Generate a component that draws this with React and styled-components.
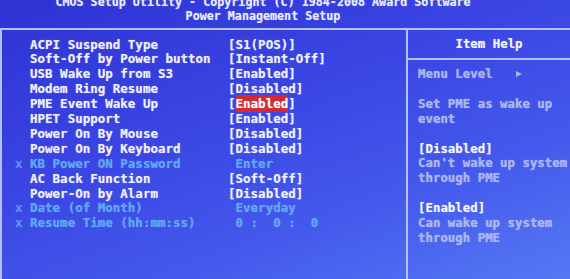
import React from 'react'
import styled, { createGlobalStyle } from 'styled-components'

const rows = [
    { label: 'ACPI Suspend Type', value: '[S1(POS)]' },
    { label: 'Soft-Off by Power button', value: '[Instant-Off]' },
    { label: 'USB Wake Up from S3', value: '[Enabled]' },
    { label: 'Modem Ring Resume', value: '[Disabled]' },
    { label: 'PME Event Wake Up', value: 'Enabled', selected: true },
    { label: 'HPET Support', value: '[Enabled]' },
    { label: 'Power On By Mouse', value: '[Disabled]' },
    { label: 'Power On By Keyboard', value: '[Disabled]' },
    { label: 'KB Power ON Password', value: ' Enter', locked: true },
    { label: 'AC Back Function', value: '[Soft-Off]' },
    { label: 'Power-On by Alarm', value: '[Disabled]' },
    { label: 'Date (of Month)', value: ' Everyday', locked: true },
    { label: 'Resume Time (hh:mm:ss)', value: ' 0 :  0 :  0', locked: true },
]

const help = [
    { text: 'Menu Level   ', arrow: true },
    { text: '' },
    { text: 'Set PME as wake up' },
    { text: 'event' },
    { text: '' },
    { text: '[Disabled]', strong: true },
    { text: "Can't wake up system" },
    { text: 'through PME' },
    { text: '' },
    { text: '[Enabled]', strong: true },
    { text: 'Can wake up system' },
    { text: 'through PME' },
]

function App() {
    return (
        <Screen>
            <GlobalStyle />
            <Header>
                <div>CMOS Setup Utility - Copyright (C) 1984-2008 Award Software</div>
                <div>Power Management Setup</div>
            </Header>
            <Frame>
                <Settings>
                    {rows.map((row, index) => (
                        <Row key={index} $locked={row.locked}>
                            <Mark>{row.locked ? 'x' : ''}</Mark>
                            <Label>{row.label}</Label>
                            <Value>
                                {row.selected ? (
                                    <>[<Selected>{row.value}</Selected>]</>
                                ) : row.value}
                            </Value>
                        </Row>
                    ))}
                </Settings>
                <HelpPanel>
                    <HelpTitle>Item Help</HelpTitle>
                    <HelpBody>
                        {help.map((line, index) => (
                            <HelpLine key={index} $strong={line.strong}>
                                {line.text}
                                {line.arrow && <Arrow />}
                            </HelpLine>
                        ))}
                    </HelpBody>
                </HelpPanel>
            </Frame>
        </Screen>
    )
}

export default App

const GlobalStyle = createGlobalStyle`
    html, body {
        margin: 0;
        padding: 0;
        width: 570px;
        height: 279px;
        overflow: hidden;
        background: #3a42e2;
    }
`

const Screen = styled.div`
    width: 570px;
    height: 279px;
    overflow: hidden;
    display: flex;
    flex-direction: column;
    background: linear-gradient(160deg, #2e33d3 0%, #3a45e3 40%, #4459ec 70%, #5479f4 100%);
    font-family: "DejaVu Sans Mono", "Liberation Mono", monospace;
    font-weight: bold;
    color: #eef0ff;
    text-shadow: 0 0 1px rgba(230, 235, 255, 0.6);
`

const Header = styled.div`
    margin-top: -5px;
    padding: 0 44px 5px 0;
    text-align: center;
    font-size: 11.7px;
    line-height: 14px;
    white-space: pre;
    color: #e6eaff;
`

const Frame = styled.div`
    flex: 1;
    display: grid;
    grid-template-columns: 408px 1fr;
    border-top: 2px solid #b4c0f6;
`

const Settings = styled.div`
    box-sizing: border-box;
    border-left: 2px solid #b4c0f6;
    border-right: 2px solid #b4c0f6;
    padding: 7.5px 0 0 13px;
    font-size: 12.5px;
`

const Row = styled.div`
    display: grid;
    grid-template-columns: 15px 198px 1fr;
    height: 14.92px;
    line-height: 14.92px;
    white-space: pre;
    color: ${props => props.$locked ? '#5ea9f6' : '#eef0ff'};
    text-shadow: ${props => props.$locked ? '0 0 1px rgba(120, 180, 255, 0.6)' : '0 0 1px rgba(230, 235, 255, 0.6)'};
`

const Mark = styled.span`
    font-weight: normal;
`

const Label = styled.span``

const Value = styled.span``

const Selected = styled.span`
    background: #d42a2e;
    color: #ffffff;
    padding: 1px 0;
`

const HelpPanel = styled.div`
    display: flex;
    flex-direction: column;
    font-size: 12.4px;
`

const HelpTitle = styled.div`
    height: 28px;
    line-height: 28px;
    text-align: center;
    border-bottom: 2px solid #b4c0f6;
    color: #f2f4ff;
`

const HelpBody = styled.div`
    padding: 7px 0 0 10px;
`

const HelpLine = styled.div`
    height: 14.92px;
    line-height: 14.92px;
    white-space: pre;
    color: ${props => props.$strong ? '#f4f5ff' : '#aab6ee'};
`

const Arrow = styled.span`
    display: inline-block;
    width: 0;
    height: 0;
    margin-left: 1px;
    vertical-align: 1px;
    border-left: 6px solid #aab6ee;
    border-top: 3.5px solid transparent;
    border-bottom: 3.5px solid transparent;
`
